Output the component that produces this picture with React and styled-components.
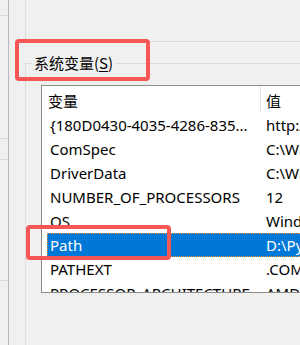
import React from 'react';
import styled, { createGlobalStyle } from 'styled-components';

const Global = createGlobalStyle`
  html, body { margin: 0; padding: 0; background: #f0f0f0; }
  body { width: 300px; height: 345px; overflow: hidden; }
`;

const Screen = styled.div`
  position: relative;
  width: 300px;
  height: 345px;
  overflow: hidden;
  display: flex;
  background: #f0f0f0;
  color: #000;
  font-family: "Noto Sans", "Noto Sans CJK SC", sans-serif;
  font-size: 15px;
`;

const SideStrip = styled.div`
  flex: 0 0 8px;
  border-right: 1px solid #b9b9b9;
  display: flex;
  flex-direction: column;
`;

const StripSeg = styled.div`
  flex-shrink: 0;
  height: ${(p) => p.$h}px;
  border-bottom: 1px solid #dadada;
`;

const Main = styled.div`
  flex: 1;
  min-width: 0;
  padding-left: 16px;
  display: flex;
  flex-direction: column;
`;

const UpperGroup = styled.div`
  flex-shrink: 0;
  height: 41px;
  border-left: 1px solid #dcdcdc;
  border-bottom: 1px solid #dcdcdc;
`;

const GroupBox = styled.div`
  position: relative;
  flex: 1;
  margin-top: 21px;
  border-left: 1px solid #dcdcdc;
  border-top: 1px solid #dcdcdc;
  padding: 21px 0 0 15px;
`;

const Legend = styled.div`
  position: absolute;
  top: -12px;
  left: 6px;
  padding: 0 2px;
  background: #f0f0f0;
  line-height: 22px;
  font-family: "Noto Sans CJK SC", sans-serif;
  font-size: 15px;
  white-space: nowrap;
`;

const Mnemonic = styled.span`
  text-decoration: underline;
  text-underline-offset: 2px;
`;

const ListView = styled.div`
  width: 400px;
  height: 206px;
  border: 1px solid #8c8c8c;
  background: #fff;
  overflow: hidden;
`;

const Header = styled.div`
  display: flex;
  height: 27px;
`;

const HeadCell = styled.div`
  flex-shrink: 0;
  width: ${(p) => p.$w}px;
  padding-left: ${(p) => p.$pad}px;
  line-height: 29px;
  font-family: "Noto Sans CJK SC", sans-serif;
  border-right: ${(p) => (p.$sep ? '1px solid #e5e5e5' : 'none')};
  box-sizing: border-box;
`;

const Row = styled.div`
  display: flex;
  height: 24px;
  margin-left: 5px;
  line-height: 24px;
  white-space: nowrap;
  background: ${(p) => (p.$selected ? '#0078d7' : 'transparent')};
  color: ${(p) => (p.$selected ? '#fff' : '#000')};
  outline: ${(p) => (p.$selected ? '1px dotted #f0933c' : 'none')};
  outline-offset: -1px;
`;

const Cell = styled.div`
  flex-shrink: 0;
  width: ${(p) => p.$w}px;
  padding-left: ${(p) => p.$pad}px;
  box-sizing: border-box;
  overflow: hidden;
  white-space: nowrap;
`;

const Annotation = styled.div`
  position: absolute;
  left: ${(p) => p.$x}px;
  top: ${(p) => p.$y}px;
  width: ${(p) => p.$w}px;
  height: ${(p) => p.$h}px;
  box-sizing: border-box;
  border: 4px solid #f75656;
  border-radius: 4px;
  pointer-events: none;
`;

const rows = [
  ['{180D0430-4035-4286-835...', 'http://localhost'],
  ['ComSpec', 'C:\\Windows\\system32\\cmd.exe'],
  ['DriverData', 'C:\\Windows\\System32\\Drivers\\DriverData'],
  ['NUMBER_OF_PROCESSORS', '12'],
  ['OS', 'Windows_NT'],
  ['Path', 'D:\\Python\\Scripts\\'],
  ['PATHEXT', '.COM;.EXE;.BAT;.CMD'],
  ['PROCESSOR_ARCHITECTURE', 'AMD64'],
];

export default function App() {
  return (
    <>
      <Global />
      <Screen>
        <SideStrip>
          <StripSeg $h={15} />
          <StripSeg $h={122} />
          <StripSeg $h={20} />
          <StripSeg $h={120} />
        </SideStrip>
        <Main>
          <UpperGroup />
          <GroupBox>
            <Legend>
              系统变量(<Mnemonic>S</Mnemonic>)
            </Legend>
            <ListView>
              <Header>
                <HeadCell $w={219} $pad={6} $sep>变量</HeadCell>
                <HeadCell $w={150} $pad={5}>值</HeadCell>
              </Header>
              {rows.map(([name, value]) => (
                <Row key={name} $selected={name === 'Path'}>
                  <Cell $w={214} $pad={3}>{name}</Cell>
                  <Cell $w={150} $pad={5}>{value}</Cell>
                </Row>
              ))}
            </ListView>
          </GroupBox>
        </Main>
        <Annotation $x={15} $y={39} $w={135} $h={42} />
        <Annotation $x={26} $y={225} $w={145} $h={35} />
      </Screen>
    </>
  );
}
